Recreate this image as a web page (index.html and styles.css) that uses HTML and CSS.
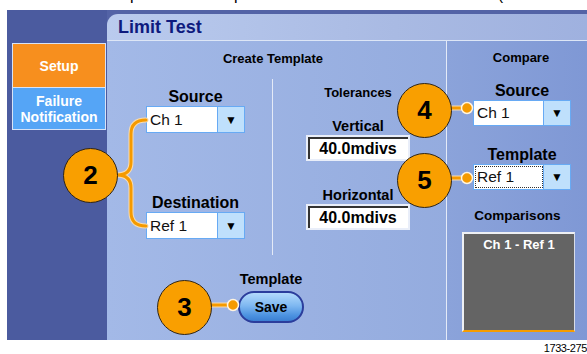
FILE: index.html
```html
<!DOCTYPE html>
<html lang="en">

<head>
    <meta charset="UTF-8">
    <title>Limit Test</title>
    <link rel="stylesheet" href="styles.css">
</head>

<body>
    <div class="page">
        <div class="cut">
            <div class="cut-line"><span class="cut-p1">p</span><span class="cut-p2">p</span><span class="cut-paren">(</span></div>
        </div>

        <div class="screen">
            <div class="side">
                <div class="tab tab-on">Setup</div>
                <div class="tab tab-off">Failure<br>Notification</div>
            </div>

            <div class="main">
                <div class="title">Limit Test</div>
                <div class="body">
                    <div class="create">
                        <div class="head head-create">Create Template</div>
                        <div class="cols">
                            <div class="col-left">
                                <div class="lbl lbl-big lbl-src">Source</div>
                                <div class="dd dd-left">
                                    <span class="dd-val">Ch 1</span>
                                    <span class="dd-btn">&#9660;</span>
                                </div>
                                <div class="lbl lbl-big lbl-dest">Destination</div>
                                <div class="dd dd-left">
                                    <span class="dd-val">Ref 1</span>
                                    <span class="dd-btn">&#9660;</span>
                                </div>
                            </div>
                            <div class="col-right">
                                <div class="head head-tol">Tolerances</div>
                                <div class="lbl lbl-mid lbl-vert">Vertical</div>
                                <div class="num">40.0mdivs</div>
                                <div class="lbl lbl-mid lbl-horz">Horizontal</div>
                                <div class="num">40.0mdivs</div>
                            </div>
                        </div>
                        <div class="save-wrap">
                            <div class="lbl lbl-mid">Template</div>
                            <div class="save">Save</div>
                        </div>
                    </div>

                    <div class="compare">
                        <div class="head head-cmp">Compare</div>
                        <div class="cmp-group">
                            <div class="lbl lbl-big lbl-csrc">Source</div>
                            <div class="dd dd-right">
                                <span class="dd-val">Ch 1</span>
                                <span class="dd-btn">&#9660;</span>
                            </div>
                            <div class="lbl lbl-big lbl-ctpl">Template</div>
                            <div class="dd dd-right">
                                <span class="dd-val"><span class="focus">Ref 1</span></span>
                                <span class="dd-btn">&#9660;</span>
                            </div>
                        </div>
                        <div class="head head-comps">Comparisons</div>
                        <div class="comps">Ch 1 - Ref 1</div>
                    </div>
                </div>
            </div>
        </div>

        <div class="fig">1733-275</div>

        <svg class="leaders" width="587" height="354" viewBox="0 0 587 354">
            <g fill="none" stroke-linecap="round" stroke-linejoin="round">
                <path class="lead-edge" d="M146 120 Q131 120 131 134 L131 162 Q131 175 117 175 Q131 175 131 188 L131 212 Q131 226 146 226" />
                <path class="lead" d="M146 120 Q131 120 131 134 L131 162 Q131 175 117 175 Q131 175 131 188 L131 212 Q131 226 146 226" />
                <path class="lead-edge" d="M211 305 L233 305" />
                <path class="lead" d="M211 305 L233 305" />
                <path class="lead-edge" d="M451 108 L467 108" />
                <path class="lead" d="M451 108 L467 108" />
                <path class="lead-edge" d="M451 178 L467 178" />
                <path class="lead" d="M451 178 L467 178" />
            </g>
            <circle class="dot" cx="233" cy="305" r="5.5" />
            <circle class="dot" cx="467" cy="108" r="5.5" />
            <circle class="dot" cx="467" cy="178" r="5.5" />
        </svg>

        <div class="callout c2">2</div>
        <div class="callout c3">3</div>
        <div class="callout c4">4</div>
        <div class="callout c5">5</div>
    </div>
</body>

</html>
```

FILE: styles.css
```css
* {
    box-sizing: border-box;
}

body {
    margin: 0;
    background: #ffffff;
    font-family: "Liberation Sans", Arial, sans-serif;
    color: #000000;
}

.page {
    position: relative;
    width: 587px;
    height: 354px;
    overflow: hidden;
}

/* bottom of the line of text above the figure */
.cut {
    height: 10px;
    overflow: hidden;
}

.cut-line {
    display: flex;
    margin-top: -13px;
    font-size: 16px;
    line-height: 16px;
}

.cut-p1 {
    margin-left: 130px;
}

.cut-p2 {
    margin-left: 95px;
}

.cut-paren {
    margin-left: 255px;
}

.screen {
    display: flex;
    width: 580px;
    height: 330px;
    margin-left: 7px;
    background: #5363a6;
}

/* left tabs */
.side {
    width: 100px;
    padding: 33px 1px 0 5px;
    background: #4b5b9f;
}

.tab {
    display: flex;
    align-items: center;
    justify-content: center;
    border: 1px solid #d8e3f6;
    color: #ffffff;
    font-weight: bold;
    font-size: 14px;
    line-height: 16px;
    text-align: center;
}

.tab-on {
    height: 45px;
    background: #f78f1e;
}

.tab-off {
    height: 42px;
    border-top: none;
    background: #55a5f6;
}

/* panel */
.main {
    display: flex;
    flex-direction: column;
    flex: 1;
    margin-top: 4px;
}

.title {
    height: 27px;
    padding: 3px 0 0 11px;
    border-radius: 11px 0 0 0;
    border-bottom: 1px solid #dde6f6;
    background: linear-gradient(90deg, #bacbee, #a9bae3 60%, #9fb1df);
    color: #0e1a7e;
    font-weight: bold;
    font-size: 18px;
    line-height: 20px;
}

.body {
    display: flex;
    flex: 1;
    background: linear-gradient(90deg, #a3b9e7, #8ea6db);
}

.head {
    font-weight: bold;
    font-size: 13px;
    line-height: 15px;
    text-align: center;
}

.lbl {
    font-weight: bold;
    text-align: center;
    white-space: nowrap;
}

.lbl-big {
    font-size: 16px;
    line-height: 18px;
}

.lbl-mid {
    font-size: 14.5px;
    line-height: 17px;
}

/* create template */
.create {
    width: 340px;
    border-right: 1px solid #e4eaf7;
}

.head-create {
    margin-top: 10px;
    padding-right: 7px;
}

.cols {
    display: flex;
    height: 176px;
    margin-top: 13px;
}

.col-left {
    width: 166px;
    padding-left: 39px;
    border-right: 1px solid #e4eaf7;
}

.col-left .lbl {
    width: 99px;
}

.lbl-src {
    margin-top: 9px;
}

.lbl-dest {
    margin-top: 61px;
}

.dd {
    display: flex;
    border: 1px solid #67aaf4;
    background: #ffffff;
}

.dd-left {
    width: 99px;
    height: 27px;
}

.dd-right {
    width: 98px;
    height: 26px;
}

.dd-val {
    display: flex;
    align-items: center;
    flex: 1;
    padding-left: 3px;
    font-size: 15.5px;
    color: #111111;
}

.dd-btn {
    display: flex;
    align-items: center;
    justify-content: center;
    width: 27px;
    border-left: 1px solid #67aaf4;
    background: #bfe0fc;
    font-size: 12px;
}

.focus {
    display: flex;
    align-items: center;
    width: 100%;
    height: 20px;
    margin-left: -1px;
    padding-left: 1px;
    outline: 1px dotted #333333;
}

.col-right {
    flex: 1;
    padding-left: 33px;
}

.col-right .lbl,
.col-right .head {
    width: 104px;
}

.head-tol {
    margin-top: 6px;
}

.lbl-vert {
    margin-top: 18px;
}

.lbl-horz {
    margin-top: 26px;
}

.num {
    width: 104px;
    height: 26px;
    border: 2px solid #e9eef9;
    background: #ffffff;
    box-shadow: inset 2px 2px 0 #333333;
    font-weight: bold;
    font-size: 16px;
    line-height: 23px;
    text-align: center;
}

.save-wrap {
    width: 66px;
    margin: 16px 0 0 131px;
}

.save-wrap .lbl {
    margin-left: -10px;
    margin-right: -10px;
}

.save {
    height: 32px;
    margin-top: 3px;
    border: 2px solid #2b3d9c;
    border-radius: 16px;
    background: linear-gradient(#b3dafc, #7fb8f1 45%, #4c92e0 80%, #3b7fd2);
    font-weight: bold;
    font-size: 14px;
    line-height: 28px;
    text-align: center;
}

/* compare */
.compare {
    flex: 1;
    background: linear-gradient(90deg, #8ba3da, #7f98d5);
}

.head-cmp {
    margin-top: 9px;
    padding-left: 8px;
}

.cmp-group {
    width: 98px;
    margin-left: 26px;
}

.lbl-csrc {
    margin-top: 17px;
}

.lbl-ctpl {
    margin-top: 20px;
}

.head-comps {
    margin-top: 18px;
    padding-left: 1px;
    font-size: 13.5px;
    line-height: 16px;
}

.comps {
    width: 113px;
    height: 100px;
    margin: 8px 0 0 15px;
    padding-top: 3px;
    border-top: 2px solid #eef0f4;
    border-left: 2px solid #eef0f4;
    border-right: 1px solid #d8dce6;
    border-bottom: 2px solid #f59c00;
    background: #646464;
    color: #ffffff;
    font-weight: bold;
    font-size: 13px;
    line-height: 15px;
    text-align: center;
}

.fig {
    margin-top: 2px;
    font-size: 11px;
    line-height: 12px;
    letter-spacing: -0.4px;
    text-align: right;
}

/* callouts over the screen */
.leaders {
    position: absolute;
    top: 0;
    left: 0;
}

.lead-edge {
    stroke: #f9dcae;
    stroke-width: 5;
}

.lead {
    stroke: #f59a00;
    stroke-width: 3;
}

.dot {
    fill: #f59a00;
    stroke: #fff4e0;
    stroke-width: 1.5;
}

.callout {
    position: absolute;
    width: 55px;
    height: 55px;
    border: 1px solid #2e2416;
    border-radius: 50%;
    background: #f99f00;
    font-weight: bold;
    font-size: 26px;
    line-height: 53px;
    text-align: center;
}

.c2 {
    left: 63px;
    top: 148px;
}

.c3 {
    left: 157px;
    top: 280px;
}

.c4 {
    left: 397px;
    top: 83px;
}

.c5 {
    left: 397px;
    top: 153px;
}
```
